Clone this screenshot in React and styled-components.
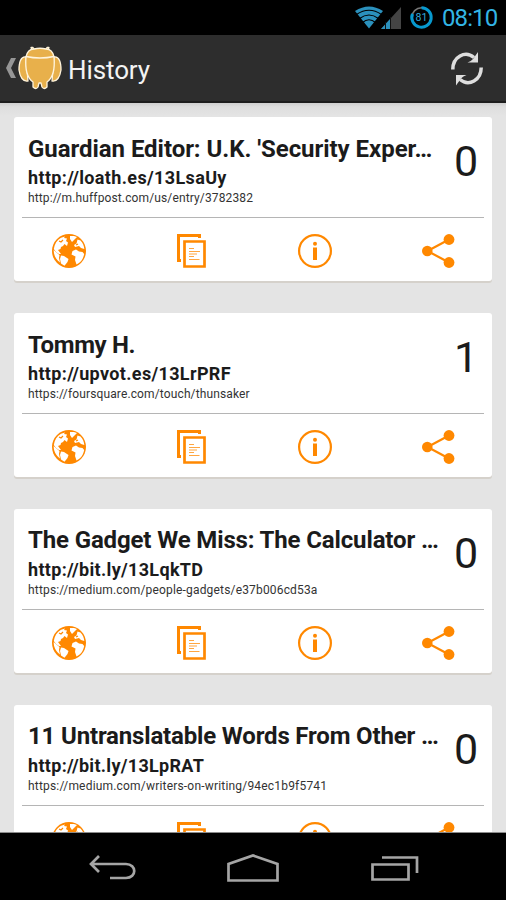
import React from "react";
import styled, { createGlobalStyle } from "styled-components";

const Global = createGlobalStyle`
  *{box-sizing:border-box}
  body{margin:0;background:#000;font-family:Roboto,"Noto Sans",sans-serif;overflow:hidden}
  svg{display:block;overflow:visible;flex:none}
`;
const Screen = styled.div`width:506px;height:900px;display:flex;flex-direction:column;background:#000;overflow:hidden;`;
const StatusBar = styled.div`height:35px;flex:none;display:flex;align-items:center;justify-content:flex-end;padding-right:8px;`;
const Clock = styled.time`width:56px;margin-left:9px;padding-top:2px;font-size:24px;line-height:35px;color:#33b5e5;white-space:nowrap;letter-spacing:-0.9px;`;
const ActionBar = styled.header`height:68px;flex:none;background:#2d2d2d;border-bottom:2px solid #1d1d1d;display:flex;align-items:center;padding:0 23px 0 6px;`;
const Heading = styled.h1`margin:4px 0 0 6px;flex:1;font-size:26px;font-weight:400;line-height:34px;color:#f3f3f3;letter-spacing:-0.1px;`;
const List = styled.main`flex:1;min-height:0;overflow:hidden;background:linear-gradient(#cfcfcf,#dedede 4px,#e4e4e4 13px);padding:14px 14px 0;display:flex;flex-direction:column;gap:32px;border-bottom:1px solid #8b8b8b;`;
const Card = styled.article`height:164px;flex:none;background:#fff;border-radius:3px;box-shadow:0 2px 0 #d5d1cb;padding:0 8px;`;
const Summary = styled.div`height:101px;display:flex;justify-content:space-between;padding:16px 5px 0 6px;border-bottom:1px solid #b5b5b5;`;
const Texts = styled.div`white-space:nowrap;color:#1b1b1b;`;
const Title = styled.h2`margin:${p => (p.$raised ? "-1px 0 2px" : "0 0 1px")};font-size:24px;line-height:32px;font-weight:700;letter-spacing:${p => p.$track}px;`;
const ShortUrl = styled.div`font-size:18px;line-height:24px;font-weight:700;letter-spacing:${p => p.$track}px;`;
const LongUrl = styled.div`font-size:12px;line-height:16px;color:#333;letter-spacing:${p => p.$track}px;`;
const Count = styled.div`font-size:43px;line-height:56px;color:#1b1b1b;width:26px;text-align:center;`;
const Actions = styled.div`height:63px;display:flex;align-items:center;justify-content:space-between;padding:2px 29px 0 30px;`;
const NavBar = styled.nav`height:67px;flex:none;display:flex;align-items:center;justify-content:space-between;padding:3px 87px 0 88px;`;

const O = "#ff8800";
const Wifi = () => (
  <svg width="28" height="22" viewBox="0 0 28 22">
    <path d="M14 21.500 0 4Q14-5 28 4Z" fill="#2b91bd" />
    <g fill="none" stroke="#000" strokeWidth="1.200"><path d="M1.500 7.500Q14-1 26.500 7.500M4.500 11.500Q14 4.500 23.500 11.500M7.500 15.500Q14 10 20.500 15.500" /></g>
  </svg>
);
const Signal = () => (
  <svg width="20" height="22" viewBox="0 0 20 22">
    <path d="M0 22 20 0V22Z" fill="#444" /><path d="M0 22 10 11V22Z" fill="#2b91bd" />
    <path d="M4.500 15V22M9.500 10V22" stroke="#111" strokeWidth="1" />
  </svg>
);
const BatteryText = styled.text`font:400 10.5px Roboto,sans-serif;fill:#33a9d8;text-anchor:middle;`;
const Battery = () => (
  <svg width="23" height="23" viewBox="0 0 23 23">
    <circle cx="11.500" cy="11.500" r="9.700" fill="none" stroke="#777" strokeWidth="1.500" />
    <path d="M11.500 1.800A9.700 9.700 0 1 1 2.500 7.900" fill="none" stroke="#0799cf" strokeWidth="3" />
    <BatteryText x="11.500" y="15.200">81</BatteryText>
  </svg>
);
const StatusIcons = styled.div`display:flex;align-items:center;& > :nth-child(2){margin-left:-2px}& > :nth-child(3){margin-left:9px}`;
const Back = () => <svg width="11" height="20" viewBox="0 0 11 20"><path d="M5 0H10L5 10 10 20H5L0 10Z" fill="#969696" /></svg>;
const LogoSvg = styled.svg`margin-left:1px;`;
const Logo = () => (
  <LogoSvg width="44" height="44" viewBox="0 0 44 44">
    <g fill="#e8b04b" stroke="#fff4dc" strokeWidth="1.300" strokeLinejoin="round" strokeLinecap="round">
      <path d="M8 11C3 10 1 16 1 24 2 31 5 36 10 35ZM36 11C41 10 43 16 43 24 42 31 39 36 34 35Z" />
      <path d="M14 4 13 1.500 15 1.500 16 3M30 4 31 1.500 29 1.500 28 3" />
      <path d="M8 11C9 6 12 3 16 3Q22 1.500 28 3C32 3 35 6 36 11C37 22 36 31 29 36V41Q26 44 24 41L23 37H21L20 41Q18 44 15 41V36C8 31 7 22 8 11Z" />
      <path d="M8 10.500Q22 13.500 36 10.500" fill="none" />
    </g>
  </LogoSvg>
);
const Refresh = () => (
  <svg width="32" height="34" viewBox="0 0 32 34">
    <g fill="none" stroke="#dedede" strokeWidth="3.500"><path d="M1.800 18.500C1.800 6 14-1 23 6.500" /><path d="M30.200 16.500C30.200 29 18 36 9 28.500" /></g>
    <path d="M27 1V11.500H16.500Q20 10.500 22 8ZM5 34.500V24H15.500Q12 25 10 27.500Z" fill="#dedede" />
  </svg>
);
const Globe = () => (
  <svg width="34" height="34" viewBox="0 0 34 34">
    <circle cx="17" cy="17" r="17" fill={O} />
    <g fill="#fff">
      <path d="M1.800 15C2.500 10 5 6 9 3.800L13 2.500 12 4 15 4.500 14 7 16 8.500 15 12 12.500 10 11 12 9 13 8.500 15 6 16 7.500 18 9 20 7 20 4 18Z" />
      <path d="M1.700 16 4.500 18.500 7.500 21 7 24 8 28.500C4 25.500 1.500 21 1.700 16Z" />
      <path d="M18 2 22 2 25 3 22 6 20 8 18 5Z" />
      <path d="M9 21.500 12 22 16.500 25 15.500 28 12.500 31.800 9 29.500 8 25Z" />
      <path d="M25.500 5.500 28.500 6.500C31 9 32 12 32.300 15L29 14 27 12 23 13 22 11 24.500 9.500Z" />
      <path d="M20.500 17 24 15.500 27 17.500 30.500 18 32.200 20C31 26 28 29 24.500 30.500L23 26 23.500 22.500 19.500 20.500Z" />
    </g>
    <path d="M7 7 9 8 11 6M24 13.500 29 15M24 11 26 10" stroke={O} strokeWidth="1.200" fill="none" />
  </svg>
);
const Copy = () => (
  <svg width="30" height="34" viewBox="0 0 30 34">
    <g fill="none" stroke={O}><path d="M22.500 4V1.500H1.500V26.500H4" strokeWidth="3" /><path d="M7.500 7.500H27.500V32.500H7.500Z" strokeWidth="2.700" />
    <path d="M12 14.500H17M12 17.500H23M12 20H20M12 22.500H17M12 25.500H22.500" strokeWidth="1" opacity=".75" /></g>
  </svg>
);
const InfoSvg = styled.svg`margin:0 -1px 0 1px;`;
const Info = () => (
  <InfoSvg width="34" height="34" viewBox="0 0 34 34">
    <circle cx="17" cy="17" r="15.900" fill="none" stroke={O} strokeWidth="2.200" />
    <circle cx="17" cy="9.800" r="2" fill={O} /><path d="M15 13.500H19V26H15Z" fill={O} />
  </InfoSvg>
);
const Share = () => (
  <svg width="33" height="34" viewBox="0 0 33 34">
    <path d="M27 5.500 5.500 17 27 28.500" fill="none" stroke={O} strokeWidth="2.200" />
    <g fill={O}><circle cx="27" cy="5.500" r="5.400" /><circle cx="5.300" cy="17" r="5.300" /><circle cx="27" cy="28.500" r="5.400" /></g>
  </svg>
);
const NavBack = () => <svg width="48" height="26" viewBox="0 0 48 26"><path d="M3 9H38C49 9 49 23 38 23H22M11 1 3 9 11 17" fill="none" stroke="#a5a5a5" strokeWidth="2.700" /></svg>;
const NavHome = () => <svg width="52" height="28" viewBox="0 0 52 28"><path d="M1.500 26.500V10L26 1.500 50.500 10V26.500Z" fill="none" stroke="#a5a5a5" strokeWidth="2.700" /></svg>;
const NavRecent = () => <svg width="49" height="26" viewBox="0 0 49 26"><path d="M12 2.500H47V18M2.500 9.500H38.500V24.500H2.500Z" fill="none" stroke="#a5a5a5" strokeWidth="2.700" /></svg>;

const items = [
  { title: "Guardian Editor: U.K. 'Security Exper…", short: "http://loath.es/13LsaUy", long: "http://m.huffpost.com/us/entry/3782382", count: 0, track: [-0.05, 0.36, 0.13] },
  { title: "Tommy H.", short: "http://upvot.es/13LrPRF", long: "https://foursquare.com/touch/thunsaker", count: 1, track: [-0.35, 0.35, 0.13] },
  { title: "The Gadget We Miss: The Calculator …", short: "http://bit.ly/13LqkTD", long: "https://medium.com/people-gadgets/e37b006cd53a", count: 0, track: [-0.14, 0.33, 0.17], raised: true },
  { title: "11 Untranslatable Words From Other …", short: "http://bit.ly/13LpRAT", long: "https://medium.com/writers-on-writing/94ec1b9f5741", count: 0, track: [-0.17, 0.31, 0.19], raised: true },
];

export default function App() {
  return (
    <Screen>
      <Global />
      <StatusBar><StatusIcons><Wifi /><Signal /><Battery /></StatusIcons><Clock>08:10</Clock></StatusBar>
      <ActionBar><Back /><Logo /><Heading>History</Heading><Refresh /></ActionBar>
      <List>
        {items.map(i => (
          <Card key={i.short}>
            <Summary>
              <Texts>
                <Title $track={i.track[0]} $raised={i.raised}>{i.title}</Title>
                <ShortUrl $track={i.track[1]}>{i.short}</ShortUrl>
                <LongUrl $track={i.track[2]}>{i.long}</LongUrl>
              </Texts>
              <Count>{i.count}</Count>
            </Summary>
            <Actions><Globe /><Copy /><Info /><Share /></Actions>
          </Card>
        ))}
      </List>
      <NavBar><NavBack /><NavHome /><NavRecent /></NavBar>
    </Screen>
  );
}
